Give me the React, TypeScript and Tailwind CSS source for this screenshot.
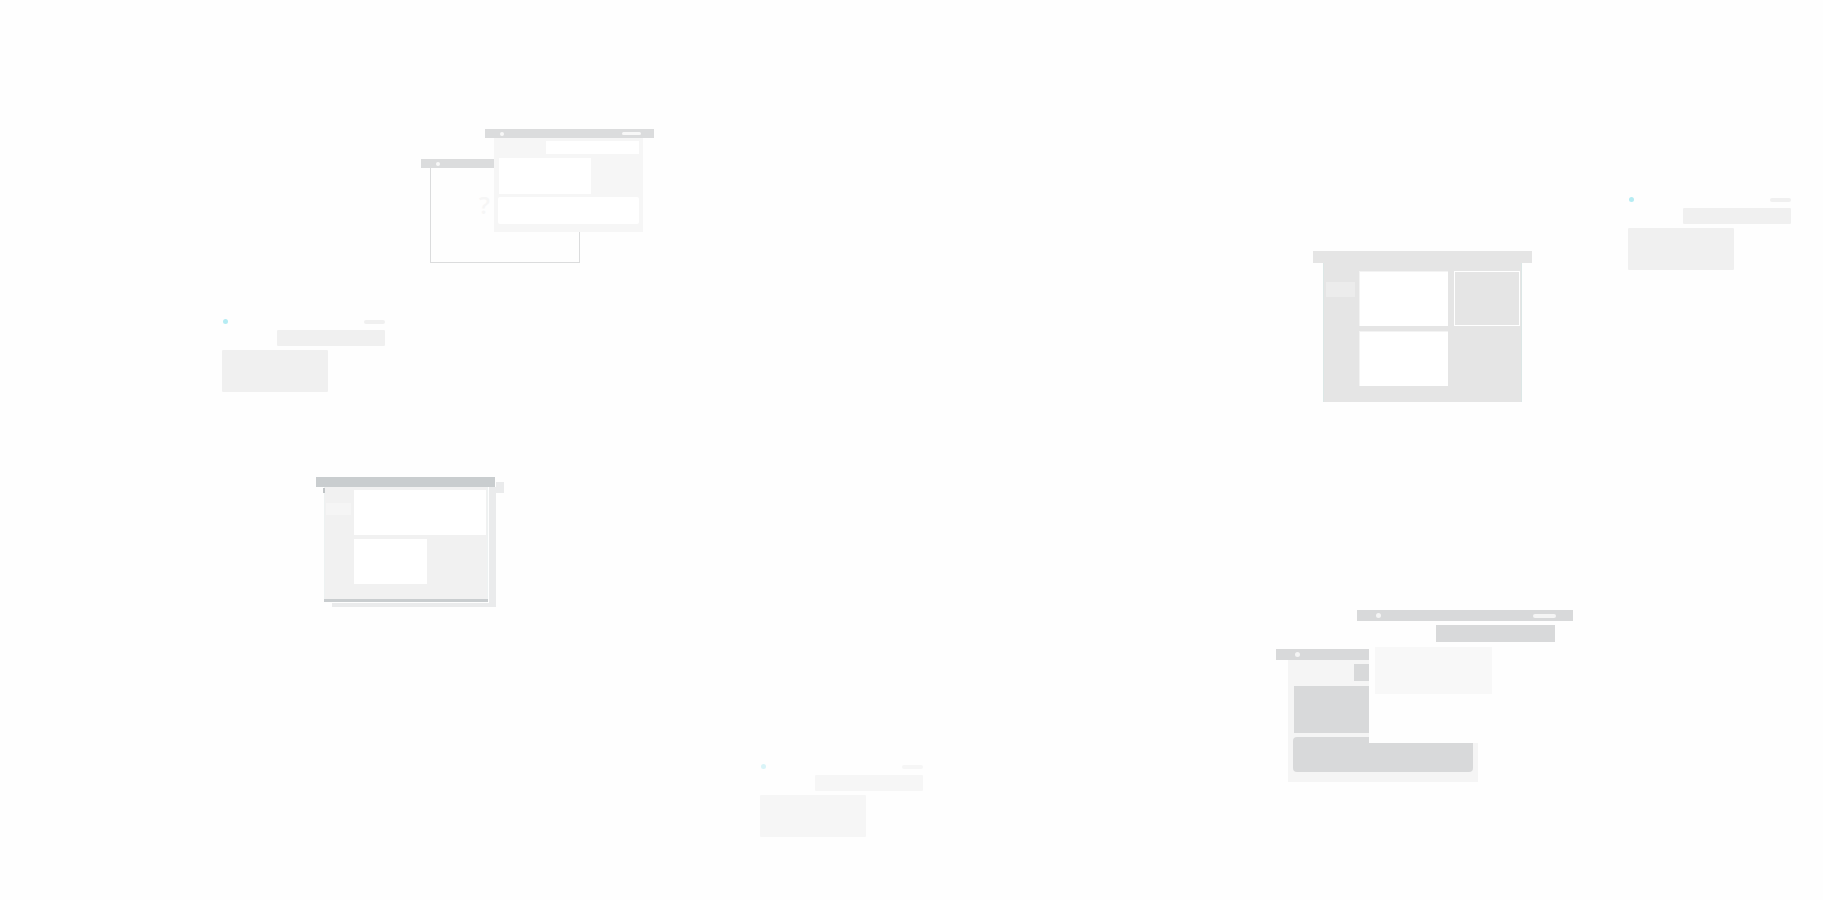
type ChatProps = {
  place: string;
};

function ChatSketch({ place }: ChatProps) {
  return (
    <div className={`absolute flex w-[163px] flex-col ${place}`}>
      <div className="flex h-[5px] items-center justify-between pl-px">
        <span className="size-[5px] rounded-full bg-[#b5ecf3]" />
        <span className="h-1 w-[21px] rounded-full bg-[#f0f0f0]" />
      </div>
      <div className="mt-[6px] h-4 w-[108px] self-end rounded-[1px] bg-[#f0f0f0]" />
      <div className="mt-1 h-[42px] w-[106px] rounded-[1px] bg-[#f0f0f0]" />
    </div>
  );
}

function EmptyWindow() {
  return (
    <div className="absolute top-[159px] left-[421px] w-[169px]">
      <div className="flex h-[9px] items-center bg-[#dbdcdd] pl-[15px]">
        <span className="size-[4px] rounded-full bg-[#f8f8f8]" />
      </div>
      <div className="mr-[10px] ml-[9px] h-[95px] border border-t-0 border-[#dbdcdd] pt-[21px] pl-12">
        <span className="block font-['Open_Sans',sans-serif] text-2xl leading-8 font-semibold text-[#f6f6f6]">?</span>
      </div>
    </div>
  );
}

function MessageWindow() {
  return (
    <div className="absolute top-[129px] left-[485px] w-[169px]">
      <div className="flex h-[9px] items-center justify-between bg-[#dbdcdd] pr-[13px] pl-[15px]">
        <span className="size-[4px] rounded-full bg-[#f8f8f8]" />
        <span className="h-[3px] w-[19px] rounded-full bg-[#f8f8f8]" />
      </div>
      <div className="mr-[11px] ml-[9px] flex h-[94px] flex-col bg-[#f6f6f6] px-1 pt-[3px]">
        <div className="h-[13px] w-[93px] self-end bg-white" />
        <div className="mt-1 ml-px h-9 w-[92px] bg-white" />
        <div className="mt-[3px] h-[27px] rounded-[2px] bg-white" />
      </div>
    </div>
  );
}

function ShadowedWindow() {
  return (
    <div className="absolute top-[477px] left-[316px] w-[188px]">
      <div className="absolute top-[5px] left-2 w-[180px]">
        <div className="h-[11px] bg-[#eaebec]" />
        <div className="mx-2 h-[114px] bg-[#eaebec]" />
      </div>
      <div className="relative w-[180px]">
        <div className="box-content h-[10px] border-r border-[#fefefe] bg-[#c9cdcf]" />
        <div className="mr-[7px] ml-2 box-content border-r border-b border-[#fefefe]">
          <div className="flex h-[112px] border-x border-[#eef2f2] bg-[#f1f1f1] pt-[3px]">
            <div className="flex w-[29px] flex-col pl-px">
              <div className="mt-[13px] h-3 w-[25px] bg-[#f5f5f5]" />
            </div>
            <div className="flex flex-col gap-1">
              <div className="h-[45px] w-[132px] bg-white" />
              <div className="h-[45px] w-[73px] bg-white" />
            </div>
          </div>
          <div className="h-[3px] bg-[#c9cdcf]" />
        </div>
        <span className="absolute top-[11px] left-[7px] h-[5px] w-[2px] bg-[#c0c4c6]" />
      </div>
    </div>
  );
}

function DashboardWindow() {
  return (
    <div className="absolute top-[251px] left-[1313px] w-[219px]">
      <div className="h-3 bg-[#e5e5e5]" />
      <div className="mx-[10px] flex h-[139px] border-x border-[#dce7e6] bg-[#e5e5e5] pt-2">
        <div className="w-[35px] pt-[11px] pl-[2px]">
          <div className="h-[15px] w-[29px] bg-[#ececec]" />
        </div>
        <div className="flex w-[89px] flex-col gap-[5px]">
          <div className="h-[55px] border-t border-l border-[#f3f3f3] bg-white" />
          <div className="h-[55px] border-t border-l border-[#f3f3f3] bg-white" />
        </div>
        <div className="ml-[6px] h-[55px] w-[66px] border border-white" />
      </div>
    </div>
  );
}

function PanelWindow() {
  return (
    <div className="absolute top-[649px] left-[1276px] w-[216px]">
      <div className="flex h-[11px] items-center bg-[#d8d9da] pl-[19px]">
        <span className="size-[5px] rounded-full bg-[#f5f5f5]" />
      </div>
      <div className="mr-[14px] ml-3 flex h-[122px] flex-col bg-[#f5f5f5] px-[5px] pt-1">
        <div className="h-[17px] w-[119px] self-end bg-[#d8d9da]" />
        <div className="mt-[5px] ml-px h-[47px] w-[117px] bg-[#d8d9da]" />
        <div className="mt-1 h-[35px] rounded bg-[#d8d9da]" />
      </div>
    </div>
  );
}

function ReplyWindow() {
  return (
    <div className="absolute top-[610px] left-[1357px] w-[216px]">
      <div className="flex h-[11px] items-center justify-between bg-[#d8d9da] pr-[17px] pl-[19px]">
        <span className="size-[5px] rounded-full bg-[#f5f5f5]" />
        <span className="h-1 w-[23px] rounded-full bg-[#f5f5f5]" />
      </div>
      <div className="mr-[14px] ml-3 flex h-[122px] flex-col bg-[#fefefe] pt-1 pr-1 pl-[6px]">
        <div className="h-[17px] w-[119px] self-end bg-[#d8d9da]" />
        <div className="mt-[5px] h-[47px] w-[117px] bg-[#f8f8f8]" />
      </div>
    </div>
  );
}

export default function App() {
  return (
    <main className="relative min-h-screen overflow-hidden bg-[#fefefe]">
      <EmptyWindow />
      <MessageWindow />
      <ChatSketch place="top-[319px] left-[222px]" />
      <ShadowedWindow />
      <ChatSketch place="top-[764px] left-[760px] opacity-50" />
      <DashboardWindow />
      <ChatSketch place="top-[197px] left-[1628px]" />
      <PanelWindow />
      <ReplyWindow />
    </main>
  );
}
